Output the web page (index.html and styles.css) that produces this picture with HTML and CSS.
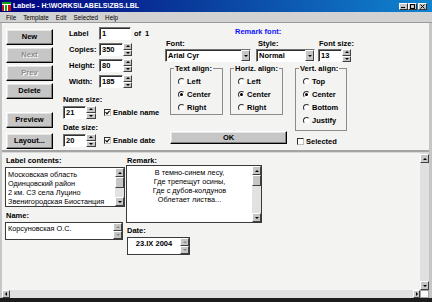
FILE: index.html
```html
<!DOCTYPE html>
<html>
<head>
<meta charset="utf-8">
<title>Labels</title>
<link rel="stylesheet" href="styles.css">
</head>
<body>
<div class="window">
  <div class="titlebar">
    <svg class="appicon" viewBox="0 0 9 9" width="9" height="9">
      <rect width="9" height="9" fill="#ffffff"/>
      <rect x="0" y="0" width="9" height="2" fill="#10a010"/>
      <rect x="0" y="3" width="2" height="6" fill="#d01010"/>
      <rect x="3" y="3" width="2" height="6" fill="#10a010"/>
      <rect x="6" y="3" width="3" height="6" fill="#d01010"/>
    </svg>
    <span class="title">Labels - H:\WORKS\LABELS\ZBS.LBL</span>
    <div class="capbtns">
      <span class="cap"><svg viewBox="0 0 7 5" width="7" height="5"><rect x="1" y="3" width="4" height="1" fill="#000"/></svg></span>
      <span class="cap"><svg viewBox="0 0 7 5" width="7" height="5"><rect x="1.5" y="0.5" width="4" height="4" fill="none" stroke="#000"/><rect x="1" y="0" width="5" height="1" fill="#000"/></svg></span>
      <span class="cap close"><svg viewBox="0 0 7 5" width="7" height="5"><path d="M1.5 0.5 L5.5 4.5 M5.5 0.5 L1.5 4.5" stroke="#000" stroke-width="1"/></svg></span>
    </div>
  </div>
  <div class="menubar">
    <span>File</span><span>Template</span><span>Edit</span><span>Selected</span><span>Help</span>
  </div>
  <div class="client">
    <div class="upper">
      <div class="col-buttons">
        <button class="btn">New</button>
        <button class="btn off">Next</button>
        <button class="btn off">Prev</button>
        <button class="btn">Delete</button>
        <button class="btn preview">Preview</button>
        <button class="btn layout">Layout...</button>
      </div>
      <div class="col-fields">
        <div class="frow">
          <span class="flabel">Label</span>
          <span class="field w32">1</span>
          <span class="of">of<span class="ofn">1</span></span>
        </div>
        <div class="frow">
          <span class="flabel">Copies:</span>
          <span class="field w24">350</span>
          <span class="spin"><i class="up"></i><i class="dn"></i></span>
        </div>
        <div class="frow">
          <span class="flabel">Height:</span>
          <span class="field w24">80</span>
          <span class="spin"><i class="up"></i><i class="dn"></i></span>
        </div>
        <div class="frow">
          <span class="flabel">Width:</span>
          <span class="field w24">185</span>
          <span class="spin"><i class="up"></i><i class="dn"></i></span>
        </div>
        <div class="slabel">Name size:</div>
        <div class="srow">
          <span class="field w23">21</span>
          <span class="spin"><i class="up"></i><i class="dn"></i></span>
          <span class="chk on"><svg viewBox="0 0 5 5" width="5" height="5"><path d="M0.5 2.2 L2 3.8 L4.6 0.8" fill="none" stroke="#000" stroke-width="1.2"/></svg></span>
          <span class="clabel">Enable name</span>
        </div>
        <div class="slabel">Date size:</div>
        <div class="srow">
          <span class="field w23">20</span>
          <span class="spin"><i class="up"></i><i class="dn"></i></span>
          <span class="chk on"><svg viewBox="0 0 5 5" width="5" height="5"><path d="M0.5 2.2 L2 3.8 L4.6 0.8" fill="none" stroke="#000" stroke-width="1.2"/></svg></span>
          <span class="clabel">Enable date</span>
        </div>
      </div>
      <div class="col-font">
        <div class="rfont">Remark font:</div>
        <div class="fontgrid">
          <span class="glabel g1">Font:</span>
          <span class="glabel g2">Style:</span>
          <span class="glabel g3">Font size:</span>
          <span class="select"><span class="sval">Arial Cyr</span><i class="dd"></i></span>
          <span class="select"><span class="sval">Normal</span><i class="dd"></i></span>
          <span class="sizebox"><span class="field w24">13</span><span class="spin"><i class="up"></i><i class="dn"></i></span></span>
        </div>
        <div class="groups">
          <div class="gleft">
            <div class="gpair">
              <fieldset class="grp">
                <legend>Text align:</legend>
                <div class="radio"><span class="dot"></span>Left</div>
                <div class="radio"><span class="dot on"></span>Center</div>
                <div class="radio"><span class="dot"></span>Right</div>
              </fieldset>
              <fieldset class="grp">
                <legend>Horiz. align:</legend>
                <div class="radio"><span class="dot"></span>Left</div>
                <div class="radio"><span class="dot on"></span>Center</div>
                <div class="radio"><span class="dot"></span>Right</div>
              </fieldset>
            </div>
            <button class="btn ok">OK</button>
          </div>
          <div class="gright">
            <fieldset class="grp vert">
              <legend>Vert. align:</legend>
              <div class="radio"><span class="dot"></span>Top</div>
              <div class="radio"><span class="dot on"></span>Center</div>
              <div class="radio"><span class="dot"></span>Bottom</div>
              <div class="radio"><span class="dot"></span>Justify</div>
            </fieldset>
            <div class="selrow"><span class="chk"></span><span class="clabel">Selected</span></div>
          </div>
        </div>
      </div>
    </div>
    <div class="split"></div>
    <div class="lower">
      <div class="lower-main">
        <div class="canvas">
          <div class="lcol">
            <div class="blabel">Label contents:</div>
            <div class="box listbox">
              <div class="btext">
                <div>Московская область</div>
                <div>Одинцовский район</div>
                <div>2 км. СЗ села Луцино</div>
                <div>Звенигородская Биостанция</div>
              </div>
              <div class="sb"><i class="arr up"></i><i class="thumb"></i><i class="track"></i><i class="arr dn"></i></div>
            </div>
            <div class="blabel name">Name:</div>
            <div class="box namebox">
              <div class="btext">Корсуновская О.С.</div>
              <div class="sb"><i class="arr half up dis"></i><i class="arr half dn dis"></i></div>
            </div>
          </div>
          <div class="rcol">
            <div class="blabel">Remark:</div>
            <div class="box remark">
              <div class="btext center">
                <div>В темно-синем лесу,</div>
                <div>Где трепещут осины,</div>
                <div>Где с дубов-колдунов</div>
                <div>Облетает листва...</div>
              </div>
              <div class="sb"><i class="arr up"></i><i class="thumb"></i><i class="track"></i><i class="arr dn"></i></div>
            </div>
            <div class="blabel date">Date:</div>
            <div class="box datebox">
              <div class="btext center bold">23.IX 2004</div>
              <div class="sb"><i class="arr half up dis"></i><i class="arr half dn dis"></i></div>
            </div>
          </div>
        </div>
        <div class="vscroll"><i class="arr up"></i><i class="track"></i><i class="arr dn"></i></div>
      </div>
      <div class="hscroll"><i class="arr lt"></i><i class="track"></i><i class="arr rt"></i><i class="corner"></i></div>
    </div>
  </div>
</div>
</body>
</html>
```

FILE: styles.css
```css
* { box-sizing: border-box; margin: 0; padding: 0; }
html, body { width: 432px; height: 302px; overflow: hidden; }
body {
  font-family: "Liberation Sans", Arial, sans-serif;
  font-size: 7.5px;
  color: #000;
  background: #c0c0c0;
}
i { display: block; font-style: normal; }

.window {
  display: flex;
  flex-direction: column;
  width: 432px;
  height: 302px;
  background: #c6c6c6;
  border-bottom: 4px solid #1c1c1c;
}

/* title bar */
.titlebar {
  height: 12px;
  flex: none;
  display: flex;
  align-items: center;
  padding-left: 2px;
  background: linear-gradient(90deg, #000080 0%, #0a3c9c 45%, #1084d0 100%);
}
.appicon { flex: none; display: block; }
.title {
  margin-left: 2px;
  color: #fff;
  font-weight: bold;
  font-size: 7px;
  line-height: 12px;
  white-space: nowrap;
}
.capbtns { margin-left: auto; margin-right: 5px; display: flex; }
.cap {
  width: 9px;
  height: 7px;
  background: #c6c6c6;
  border: 1px solid;
  border-color: #fff #303030 #303030 #fff;
  display: flex;
  align-items: center;
  justify-content: center;
  overflow: hidden;
}
.cap svg { display: block; }
.cap.close { margin-left: 1px; }

/* menu */
.menubar {
  height: 11px;
  flex: none;
  display: flex;
  align-items: center;
  gap: 7px;
  padding-left: 6px;
  background: #d2d2d2;
  font-size: 6.3px;
  border-bottom: 1px solid #9a9a9a;
}

/* client */
.client {
  flex: 1;
  display: flex;
  flex-direction: column;
  margin: 0 3px 0 2px;
  min-height: 0;
}
.upper {
  height: 127px;
  flex: none;
  display: flex;
  align-items: flex-start;
  background: #f3f3f1;
  font-weight: bold;
}

/* buttons */
.btn {
  display: block;
  width: 47px;
  height: 16px;
  background: #c6c6c6;
  border: 1px solid;
  border-color: #fff #000 #000 #fff;
  box-shadow: inset -1px -1px #808080, inset 1px 1px #e4e4e4;
  font: bold 7.5px "Liberation Sans", Arial, sans-serif;
  color: #000;
  text-align: center;
  line-height: 14px;
  padding: 0;
}
.btn.off { color: #8c8c8c; text-shadow: 1px 1px #fff; }
.col-buttons {
  margin-left: 4px;
  padding-top: 6px;
  width: 47px;
  display: flex;
  flex-direction: column;
  gap: 2px;
}
.col-buttons .preview { margin-top: 11px; }
.col-buttons .layout { margin-top: 3px; }

/* fields */
.field {
  display: block;
  height: 13px;
  background: #fff;
  border: 1px solid;
  border-color: #707070 #fff #fff #707070;
  box-shadow: inset 1px 1px #303030;
  line-height: 11px;
  padding-left: 2px;
  font-weight: bold;
  white-space: nowrap;
}
.w32 { width: 32px; }
.w24 { width: 24px; }
.w23 { width: 23px; }

.spin {
  width: 9px;
  height: 13px;
  display: flex;
  flex-direction: column;
  flex: none;
}
.spin i {
  flex: 1;
  background: #c6c6c6;
  border: 1px solid;
  border-color: #fff #404040 #404040 #fff;
  display: flex;
  align-items: center;
  justify-content: center;
}
.spin i::before, .arr::before, .dd::before {
  content: "";
  width: 0;
  height: 0;
}
.spin .up::before, .arr.up::before {
  border-left: 2px solid transparent;
  border-right: 2px solid transparent;
  border-bottom: 2px solid #000;
}
.spin .dn::before, .arr.dn::before, .dd::before {
  border-left: 2px solid transparent;
  border-right: 2px solid transparent;
  border-top: 2px solid #000;
}
.arr.lt::before {
  border-top: 2px solid transparent;
  border-bottom: 2px solid transparent;
  border-right: 2px solid #000;
}
.arr.rt::before {
  border-top: 2px solid transparent;
  border-bottom: 2px solid transparent;
  border-left: 2px solid #000;
}
.arr.dis.up::before { border-bottom-color: #8a8a8a; }
.arr.dis.dn::before { border-top-color: #8a8a8a; }

.col-fields {
  margin-left: 10px;
  width: 97px;
  padding-top: 4px;
  display: flex;
  flex-direction: column;
}
.frow {
  display: flex;
  align-items: center;
  height: 13px;
  padding-left: 6px;
  margin-bottom: 3px;
}
.flabel { width: 30px; line-height: 13px; }
.of { margin-left: 3px; line-height: 13px; }
.ofn { margin-left: 4px; }
.slabel { line-height: 9px; margin-top: 4px; }
.srow {
  display: flex;
  align-items: center;
  height: 13px;
  margin-top: 2px;
  white-space: nowrap;
}
.srow .spin { width: 10px; }
.srow .chk { margin-left: 8px; }

.chk {
  width: 7px;
  height: 7px;
  flex: none;
  background: #fff;
  border: 1px solid;
  border-color: #303030 #c0c0c0 #c0c0c0 #303030;
  display: flex;
  align-items: center;
  justify-content: center;
}
.chk svg { display: block; }
.clabel { margin-left: 2px; white-space: nowrap; }

/* font column */
.col-font {
  margin-left: 5px;
  width: 190px;
  display: flex;
  flex-direction: column;
}
.rfont {
  margin-top: 4px;
  margin-left: 70px;
  line-height: 9px;
  color: #1010ff;
}
.fontgrid {
  margin-top: 3px;
  display: grid;
  grid-template-columns: 86px 59px 34px;
  grid-template-rows: 9px 13px;
  column-gap: 5px;
  row-gap: 1px;
}
.fontgrid .sizebox { margin-left: -2px; display: flex; }
.glabel { line-height: 9px; }
.g1 { padding-left: 1px; }
.g2 { padding-left: 2px; }
.g3 { padding-left: -1px; margin-left: -1px; }
.select {
  display: flex;
  height: 13px;
  background: #fff;
  border: 1px solid;
  border-color: #707070 #fff #fff #707070;
  box-shadow: inset 1px 1px #303030;
}
.sval { flex: 1; line-height: 11px; padding-left: 2px; white-space: nowrap; overflow: hidden; }
.dd {
  width: 9px;
  flex: none;
  background: #c6c6c6;
  border: 1px solid;
  border-color: #fff #404040 #404040 #fff;
  display: flex;
  align-items: center;
  justify-content: center;
}

.groups { display: flex; margin-top: 2px; }
.gleft { margin-left: 5px; width: 117px; display: flex; flex-direction: column; }
.gpair { display: flex; gap: 7px; }
.grp {
  width: 53px;
  border: 1px solid #8c8c8c;
  padding: 2px 0 0 0;
  min-width: 0;
}
.grp legend {
  margin-left: 3px;
  padding: 0 1px;
  line-height: 9px;
  font-weight: bold;
}
.grp.vert { width: 52px; padding-bottom: 3px; }
.radio {
  display: flex;
  align-items: center;
  height: 13px;
  padding-left: 7px;
  white-space: nowrap;
}
.dot {
  width: 7px;
  height: 7px;
  flex: none;
  border-radius: 50%;
  border: 1px solid;
  border-color: #303030 #f8f8f8 #f8f8f8 #303030;
  background: #fff;
  margin-right: 2px;
  display: flex;
  align-items: center;
  justify-content: center;
}
.dot.on::before {
  content: "";
  width: 3px;
  height: 3px;
  border-radius: 50%;
  background: #000;
}
.btn.ok { width: 117px; height: 13px; line-height: 11px; margin-top: 16px; }
.gright { margin-left: 8px; display: flex; flex-direction: column; }
.selrow { display: flex; align-items: center; margin-top: 6px; padding-left: 2px; height: 9px; }

/* split */
.split {
  height: 3px;
  flex: none;
  background: #a4a4a4;
  border-bottom: 1px solid #d8d8d8;
}

/* lower */
.lower { flex: 1; display: flex; flex-direction: column; min-height: 0; }
.lower-main { flex: 1; display: flex; min-height: 0; }
.canvas {
  flex: 1;
  background: #f3f3f1;
  display: flex;
  align-items: flex-start;
  padding: 3px 0 0 3px;
}
.lcol { width: 121px; display: flex; flex-direction: column; }
.rcol { display: flex; flex-direction: column; }
.blabel { line-height: 9px; font-weight: bold; margin-left: 1px; }
.blabel.name { margin-top: 4px; }
.blabel.date { margin-top: 3px; }

.box {
  display: flex;
  background: #fff;
  border: 1px solid #3a3a3a;
}
.btext {
  flex: 1;
  min-width: 0;
  padding: 2px 0 0 2px;
  line-height: 9px;
  font-size: 7.3px;
  white-space: nowrap;
  overflow: hidden;
}
.btext.center { text-align: center; padding-left: 0; }
.btext.bold { font-weight: bold; font-size: 7.5px; }
.listbox { width: 120px; height: 40px; margin-top: 2px; }
.namebox { width: 118px; height: 18px; margin-top: 2px; }
.namebox .btext, .datebox .btext { padding-top: 1px; }
.remark { width: 136px; height: 58px; }
.datebox { width: 63px; height: 18px; margin-top: 2px; margin-left: 1px; }

.sb {
  width: 9px;
  flex: none;
  display: flex;
  flex-direction: column;
  background: #e2e2e2;
}
.arr {
  flex: none;
  height: 9px;
  background: #c6c6c6;
  border: 1px solid;
  border-color: #fff #404040 #404040 #fff;
  display: flex;
  align-items: center;
  justify-content: center;
}
.arr.half { flex: 1; height: auto; }
.thumb {
  flex: none;
  height: 11px;
  background: #c6c6c6;
  border: 1px solid;
  border-color: #fff #404040 #404040 #fff;
}
.track { flex: 1; }

.vscroll {
  width: 9px;
  flex: none;
  display: flex;
  flex-direction: column;
  background: #e0e0e0;
  padding-top: 1px;
}
.hscroll {
  height: 8px;
  flex: none;
  display: flex;
  background: #e0e0e0;
}
.hscroll .arr { height: 8px; width: 8px; }
.hscroll .arr.rt { width: 7px; }
.corner { width: 9px; background: #fafafa; border: 1px solid #a0a0a0; }
```
